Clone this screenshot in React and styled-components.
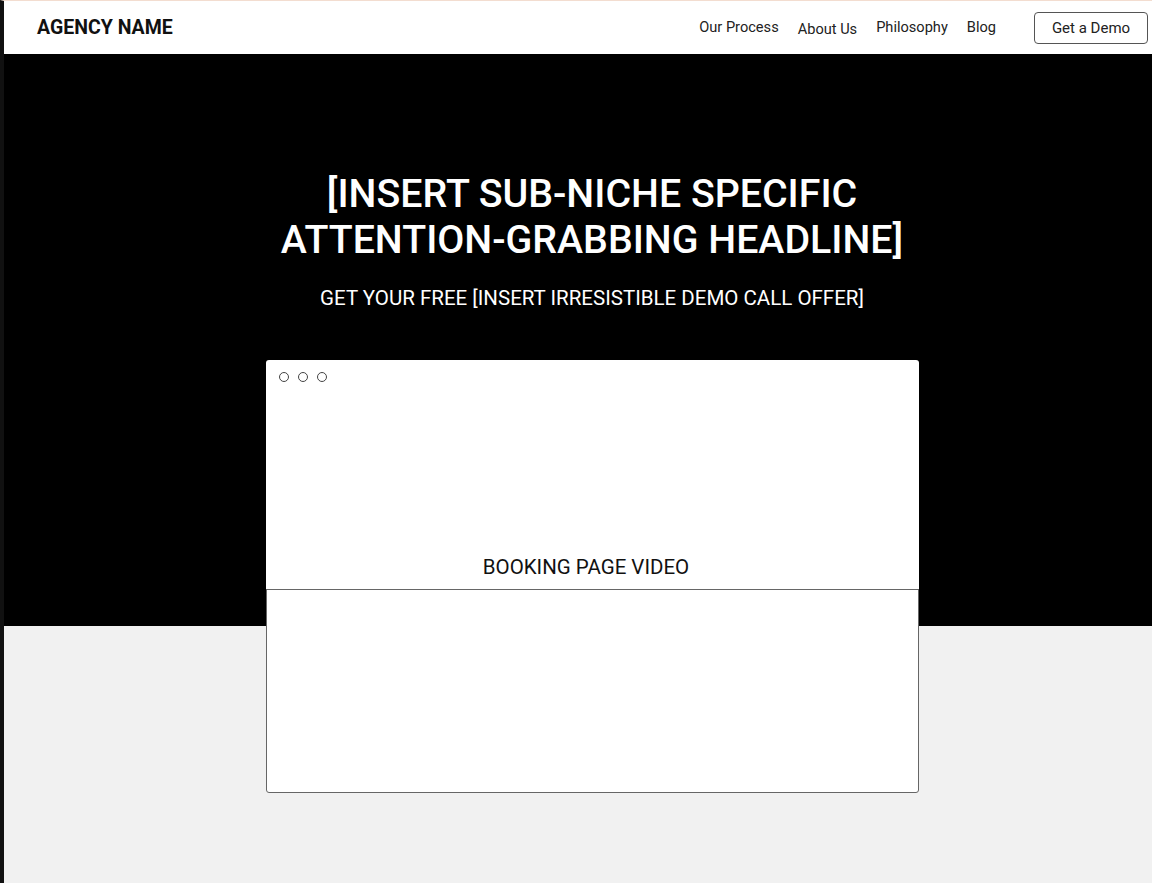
import React from 'react';
import styled, { createGlobalStyle } from 'styled-components';

const GlobalStyle = createGlobalStyle`
  body {
    margin: 0;
    background: #f1f1f1;
    font-family: Roboto, "Liberation Sans", Arial, sans-serif;
  }
`;

const Page = styled.div`
  min-height: 883px;
  border-left: 4px solid #111;
  border-top: 1px solid #f3ddd0;
  box-sizing: border-box;
  background: #f1f1f1;
`;

const Nav = styled.header`
  display: flex;
  align-items: center;
  justify-content: space-between;
  height: 53px;
  padding: 0 4px 0 33px;
  background: #fff;
  box-sizing: border-box;
`;

const Logo = styled.div`
  font-size: 19.5px;
  font-weight: 700;
  color: #111;
`;

const NavLinks = styled.nav`
  display: flex;
  align-items: center;
`;

const NavLink = styled.a`
  font-size: 14.6px;
  color: #222;
  text-decoration: none;
  margin-right: 19px;
  margin-top: ${(p) => (p.$low ? '3px' : '-1px')};

  &:last-of-type {
    margin-right: 38px;
  }
`;

const DemoButton = styled.button`
  width: 114px;
  height: 32px;
  margin-top: 1px;
  background: #fff;
  border: 1px solid #555;
  border-radius: 4px;
  font-family: inherit;
  font-size: 15px;
  color: #222;
  cursor: pointer;
`;

const Hero = styled.section`
  display: flex;
  flex-direction: column;
  align-items: center;
  background: #000;
  padding: 117px 0 0 28px;
  height: 572px;
  box-sizing: border-box;
`;

const Headline = styled.h1`
  margin: 0;
  font-size: 39.3px;
  font-weight: 500;
  line-height: 46px;
  color: #fff;
  text-align: center;
  width: 680px;
`;

const Sub = styled.p`
  margin: 23px 0 0;
  font-size: 20.5px;
  color: #fff;
  text-align: center;
`;

const VideoCard = styled.div`
  width: 653px;
  margin-top: 50px;
  margin-left: 1px;
  display: flex;
  flex-direction: column;
`;

const CardTop = styled.div`
  height: 229px;
  background: #fff;
  border-radius: 3px 3px 0 0;
  display: flex;
  flex-direction: column;
  justify-content: space-between;
  padding: 12px 12px 10px 13px;
  box-sizing: border-box;
`;

const Dots = styled.div`
  display: flex;
  gap: 9px;
`;

const Dot = styled.span`
  width: 8px;
  height: 8px;
  border: 1.3px solid #444;
  border-radius: 50%;
`;

const CardLabel = styled.div`
  font-size: 20.5px;
  color: #111;
  text-align: center;
  margin-right: 14px;
`;

const CardBottom = styled.div`
  height: 204px;
  background: #fff;
  border: 1px solid #666;
  border-radius: 0 0 3px 3px;
  box-sizing: border-box;
`;

export default function App() {
  return (
    <>
      <GlobalStyle />
      <Page>
        <Nav>
          <Logo>AGENCY NAME</Logo>
          <NavLinks>
            <NavLink href="#">Our Process</NavLink>
            <NavLink href="#" $low>About Us</NavLink>
            <NavLink href="#">Philosophy</NavLink>
            <NavLink href="#">Blog</NavLink>
            <DemoButton>Get a Demo</DemoButton>
          </NavLinks>
        </Nav>
        <Hero>
          <Headline>[INSERT SUB-NICHE SPECIFIC ATTENTION-GRABBING HEADLINE]</Headline>
          <Sub>GET YOUR FREE [INSERT IRRESISTIBLE DEMO CALL OFFER]</Sub>
          <VideoCard>
            <CardTop>
              <Dots>
                <Dot />
                <Dot />
                <Dot />
              </Dots>
              <CardLabel>BOOKING PAGE VIDEO</CardLabel>
            </CardTop>
            <CardBottom />
          </VideoCard>
        </Hero>
      </Page>
    </>
  );
}
